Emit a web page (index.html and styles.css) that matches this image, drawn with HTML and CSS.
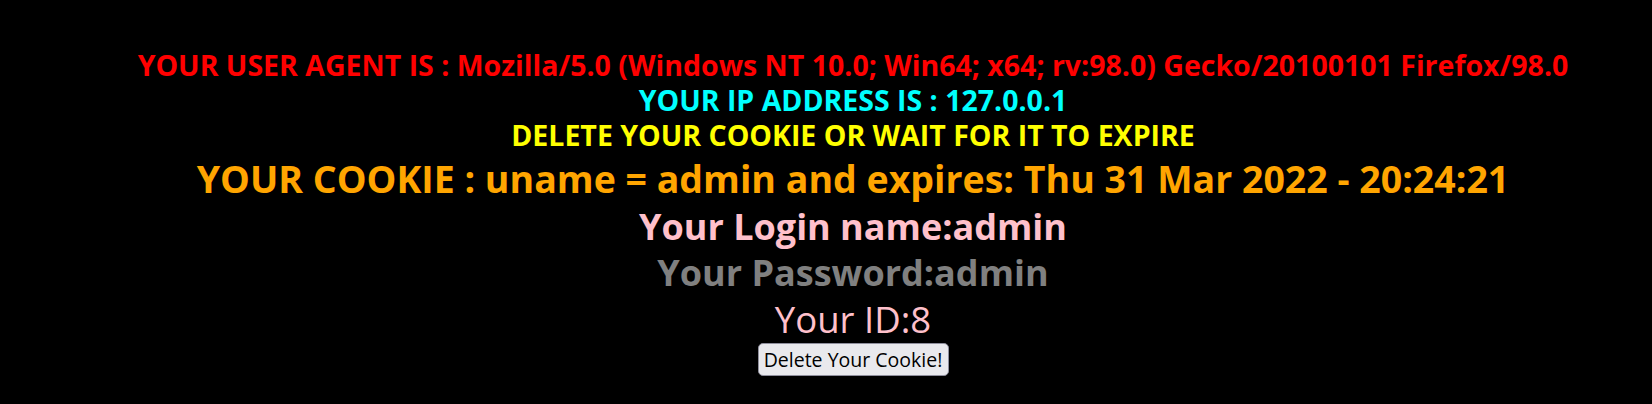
FILE: index.html
```
<!DOCTYPE html>
<html>
<head>
<meta charset="utf-8">
<link rel="stylesheet" href="styles.css">
</head>
<body>
<div class="page">
  <div class="line agent">YOUR USER AGENT IS : Mozilla/5.0 (Windows NT 10.0; Win64; x64; rv:98.0) Gecko/20100101 Firefox/98.0</div>
  <div class="line ip">YOUR IP ADDRESS IS : 127.0.0.1</div>
  <div class="line notice">DELETE YOUR COOKIE OR WAIT FOR IT TO EXPIRE</div>
  <div class="line cookie">YOUR COOKIE : uname = admin and expires: Thu 31 Mar 2022 - 20:24:21</div>
  <div class="line login">Your Login name:admin</div>
  <div class="line pass">Your Password:admin</div>
  <div class="line uid">Your ID:8</div>
  <form class="form" action="" method="post">
    <button class="btn" type="button">Delete Your Cookie!</button>
  </form>
</div>
</body>
</html>
```

FILE: styles.css
```
html, body {
  margin: 0;
  padding: 0;
  background: #000;
}
body {
  width: 1652px;
  height: 404px;
  overflow: hidden;
}
.page {
  padding: 47px 0 0 54px;
  text-align: center;
  font-family: "Open Sans", "Noto Sans", sans-serif;
}
.line {
  white-space: nowrap;
  font-weight: 700;
}
.agent {
  color: #ff0000;
  font-size: 28.5px;
  line-height: 36px;
}
.ip {
  color: #00ffff;
  font-size: 28.5px;
  line-height: 35px;
}
.notice {
  color: #ffff00;
  font-size: 28.5px;
  line-height: 35px;
}
.cookie {
  color: #ffa500;
  font-size: 37.5px;
  line-height: 51px;
}
.login {
  color: #ffc0cb;
  font-size: 36px;
  line-height: 46px;
}
.pass {
  color: #808080;
  font-size: 36px;
  line-height: 46px;
}
.uid {
  color: #ffc0cb;
  font-size: 36.5px;
  font-weight: 400;
  line-height: 47px;
}
.form {
  margin: 0;
  display: flex;
  justify-content: center;
}
.btn {
  width: 191px;
  height: 33px;
  padding: 0;
  box-sizing: border-box;
  background: #e9e9ed;
  border: 1px solid #8f8f9d;
  border-radius: 5px;
  color: #000;
  font-family: "Open Sans", "Noto Sans", sans-serif;
  font-size: 19.5px;
  line-height: 31px;
}
```
